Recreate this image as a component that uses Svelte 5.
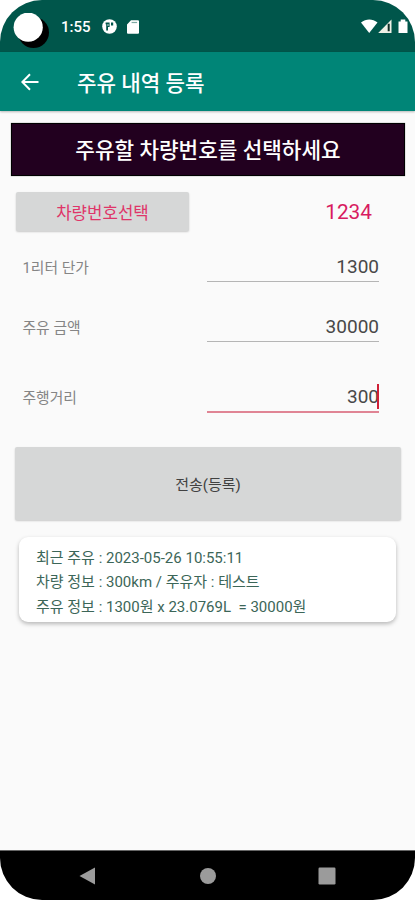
<script>
  const fields = [
    { label: '1리터 단가', value: '1300', cls: 'price' },
    { label: '주유 금액', value: '30000', cls: 'amount' },
    { label: '주행거리', value: '300', cls: 'distance', focused: true }
  ];
  const lines = [
    '최근 주유 : 2023-05-26 10:55:11',
    '차량 정보 : 300km / 주유자 : 테스트',
    '주유 정보 : 1300원 x 23.0769L  = 30000원'
  ];
</script>

<div class="phone">
  <header class="status">
    <svg class="camera" viewBox="0 0 38 38" width="38" height="38">
      <circle cx="20.5" cy="19.5" r="15.5" fill="#000" />
      <circle cx="15.2" cy="14.2" r="14.6" fill="#fff" />
    </svg>
    <span class="clock">1:55</span>
    <svg class="app-icon" viewBox="0 0 15 15" width="15" height="15">
      <circle cx="7.5" cy="7.5" r="7.3" fill="#fff" />
      <path d="M3.600 3.500h4v4.500H6v3.500H4.200V5.300h-.600zM9 3.500h2.200v3H9z" fill="#00564b" />
      <path d="M6 5v2" stroke="#fff" stroke-width=".8" />
    </svg>
    <svg class="sd" viewBox="0 0 12 14" width="12" height="14">
      <path d="M4 .3h7a1 1 0 0 1 1 1v11.4a1 1 0 0 1-1 1H1a1 1 0 0 1-1-1V4.400z" fill="#fff" />
      <path d="M4.600 2.500h5.500" stroke="#00564b" stroke-width="1.200" opacity=".5" />
    </svg>
    <svg class="system" viewBox="0 0 48 15" width="48" height="15">
      <path d="M0 3.500C5-.6 11.500-.6 16.500 3.500L8.200 14z" fill="#fff" />
      <path d="M30.500.5V14H17.200z" fill="#eef0e6" />
      <path d="M27.700 4.700v7.500" stroke="#102d25" stroke-width="2" />
      <path d="M37.500 2.500h2.200V.5h4.600v2h2.200V14h-9z" fill="#fff" />
    </svg>
  </header>

  <nav class="toolbar">
    <svg viewBox="0 0 18 18" width="18" height="18">
      <path d="M17.500 9H1.500M9 1.200L1.300 9 9 16.800" fill="none" stroke="#fff" stroke-width="2" />
    </svg>
    <h1>주유 내역 등록</h1>
  </nav>

  <main>
    <div class="banner">주유할 차량번호를 선택하세요</div>
    <div class="vehicle">
      <button class="pick">차량번호선택</button>
      <span class="number">1234</span>
    </div>
    {#each fields as f}
      <div class="field {f.cls}">
        <span class="label">{f.label}</span>
        <div class="entry" class:focused={f.focused}>
          <span>{f.value}</span>
          {#if f.focused}<i class="caret"></i>{/if}
        </div>
      </div>
    {/each}
    <button class="submit">전송(등록)</button>
    <section class="card">
      {#each lines as line}<p>{line}</p>{/each}
    </section>
  </main>

  <footer>
    <svg viewBox="0 0 18 18" width="18" height="18"><path d="M.500 9L16 .500v17z" fill="#9b9b9b" /></svg>
    <svg viewBox="0 0 18 18" width="18" height="18"><circle cx="9" cy="9" r="8" fill="#9b9b9b" /></svg>
    <svg viewBox="0 0 18 18" width="18" height="18"><rect x=".5" y=".5" width="17" height="17" rx="1.200" fill="#9b9b9b" /></svg>
  </footer>
</div>

<style>
  :global(body) {
    margin: 0;
    background: #fff;
  }
  .phone {
    width: 415px;
    height: 900px;
    display: flex;
    flex-direction: column;
    overflow: hidden;
    border-radius: 42px;
    background: #fafafa;
    font-family: Roboto, 'Noto Sans CJK KR', sans-serif;
    white-space: nowrap;
  }
  .status {
    height: 52px;
    flex: none;
    display: flex;
    align-items: flex-start;
    background: #00564b;
    color: #fff;
  }
  .camera { margin: 13px 0 0 13px; }
  .clock {
    width: 32px;
    margin: 18px 0 0 10px;
    font-size: 15px;
    line-height: 18px;
    font-weight: 500;
  }
  .app-icon { margin: 19px 0 0 9px; }
  .sd { margin: 20px 0 0 10px; }
  .system { margin: 19px 6px 0 auto; }
  .toolbar {
    height: 59px;
    flex: none;
    display: flex;
    align-items: center;
    box-sizing: border-box;
    padding: 1px 0 0 21px;
    background: #008577;
    color: #fff;
    box-shadow: 0 1px 2px #0004;
  }
  h1 {
    margin: 3px 0 0 38px;
    font-size: 21.2px;
    line-height: 30px;
    font-weight: 500;
  }
  main {
    flex: 1;
    min-height: 0;
    display: flex;
    flex-direction: column;
    padding: 12px 10px 0 11px;
  }
  .banner {
    height: 53px;
    flex: none;
    box-sizing: border-box;
    display: flex;
    align-items: center;
    justify-content: center;
    padding-bottom: 2px;
    border: 1px solid #000;
    background: #22001f;
    color: #fff;
    font-size: 21.300px;
    font-weight: 500;
    box-shadow: 0 0 1px #0008;
  }
  button {
    border: 0;
    padding: 0;
    font-family: inherit;
    background: #d6d7d7;
    border-radius: 2px;
    box-shadow: 0 1px 2px #0003;
  }
  .vehicle {
    display: flex;
    justify-content: space-between;
    align-items: center;
    height: 39px;
    margin: 16px 33px 0 5px;
  }
  .pick {
    width: 173px;
    height: 39px;
    color: #df3569;
    font-size: 16.800px;
  }
  .number {
    color: #d81b60;
    font-size: 20.800px;
  }
  .field {
    display: flex;
    justify-content: space-between;
    align-items: flex-start;
    padding: 0 26px 0 11.500px;
    height: 30px;
  }
  .price { margin-top: 21px; }
  .amount { margin-top: 30px; }
  .distance { margin-top: 40px; }
  .label {
    font-size: 14.800px;
    line-height: 32px;
    color: #858585;
  }
  .entry {
    width: 172px;
    height: 30px;
    box-sizing: border-box;
    border-bottom: 1.500px solid #b5b5b5;
    display: flex;
    justify-content: flex-end;
    align-items: center;
    font-size: 19px;
    color: #484848;
    position: relative;
  }
  .entry.focused {
    height: 31px;
    border-bottom: 2px solid #e08494;
  }
  .caret {
    position: absolute;
    right: 0;
    bottom: 2px;
    width: 2px;
    height: 25px;
    background: #cf2036;
  }
  .submit {
    flex: none;
    height: 73px;
    margin: 35px 4px 0 4px;
    padding-bottom: 1px;
    color: #414141;
    font-size: 15px;
  }
  .card {
    box-sizing: border-box;
    height: 85px;
    margin: 17px 9px 0 8px;
    padding: 8.500px 17px;
    border-radius: 9px;
    background: #fff;
    box-shadow: 0 2px 4px #0004;
    color: #3c6658;
  }
  p {
    margin: 0;
    font-size: 15px;
    line-height: 24.500px;
    white-space: pre;
  }
  footer {
    height: 50px;
    flex: none;
    box-sizing: border-box;
    display: flex;
    justify-content: space-between;
    align-items: center;
    padding: 0 79px;
    background: #000;
    border-top: 1px solid #666;
  }
</style>
